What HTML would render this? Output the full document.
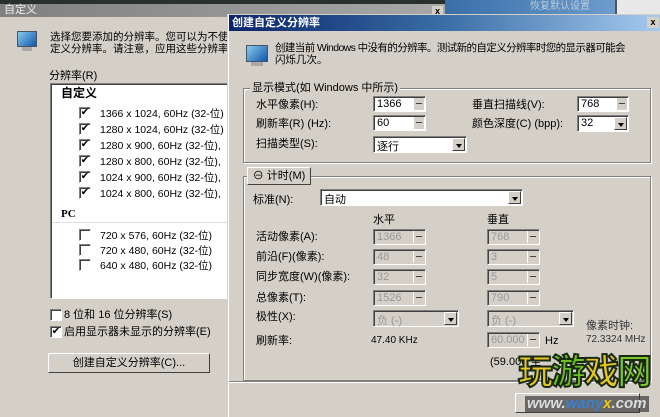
<!DOCTYPE html>
<html><head><meta charset="utf-8"><style>
*{margin:0;padding:0;box-sizing:border-box}
body{width:660px;height:417px;overflow:hidden;background:#d4d0c8;position:relative;font-family:"Liberation Sans","Noto Sans CJK SC",sans-serif;font-size:11px;color:#000}
.a{position:absolute;white-space:nowrap;line-height:12px}
.sunk{position:absolute;background:#fff;border:1px solid;border-color:#808080 #fff #fff #808080;box-shadow:inset 1px 1px 0 #404040}
.dis{background:#d4d0c8;color:#999}
.spin{position:absolute;right:1px;top:1px;bottom:1px;width:11px;background:#d4d0c8;border-left:1px solid #fff}
.spin:before{content:"";position:absolute;left:2px;right:2px;top:45%;border-top:1px solid #444}
.dd{position:absolute;right:1px;top:1px;bottom:1px;width:13px;background:#d4d0c8;border:1px solid;border-color:#fff #404040 #404040 #fff}
.dd:after{content:"";position:absolute;left:3px;top:5px;border:3px solid transparent;border-top:4px solid #000}
.grp{position:absolute;border:1px solid #808080;box-shadow:1px 1px 0 #fff inset,1px 1px 0 #fff}
.cb{position:absolute;width:12px;height:12px;background:#fff;border:1px solid;border-color:#808080 #fff #fff #808080;box-shadow:inset 1px 1px 0 #404040;font-size:10px;line-height:10px;text-align:center}
.btn{position:absolute;background:#d4d0c8;border:1px solid;border-color:#fff #404040 #404040 #fff;text-align:center}
.lst{font-size:10.5px}
</style></head><body>
<div class="a" style="left:0;top:0;width:660px;height:4px;background:#2a3030"></div>
<div class="a" style="left:0;top:4px;width:445px;height:13px;background:linear-gradient(90deg,#808080,#a8a8a8);color:#eee;padding-left:4px;line-height:13px">自定义</div>
<div class="a" style="left:432px;top:6px;width:11px;height:10px;background:#d4d0c8;font-size:9px;line-height:10px;text-align:center;font-weight:bold">x</div>
<div class="a" style="left:445px;top:0;width:170px;height:16px;background:linear-gradient(90deg,#3a6ea8,#6c9ccc);color:#bcd;text-align:center;padding-left:60px;font-size:10px;line-height:14px">恢复默认设置</div>
<div class="a" style="left:615px;top:0;width:45px;height:16px;background:#e8e8e8;border-left:2px solid #555"></div>

<div class="a" style="left:17px;top:31px;width:20px;height:16px;background:linear-gradient(135deg,#8ce,#15a);border:1px solid #456"></div>
<div class="a" style="left:22px;top:47px;width:10px;height:4px;background:#aaa"></div>
<div class="a" style="left:50px;top:31px;font-size:10.5px">选择您要添加的分辨率。您可以为不使用</div>
<div class="a" style="left:50px;top:43px;font-size:10.5px">定义分辨率。请注意，应用这些分辨率可</div>
<div class="a" style="left:49px;top:70px">分辨率(R)</div>
<div class="sunk" style="left:50px;top:83px;width:190px;height:216px"></div>
<div class="a" style="left:61px;top:86px;font-size:12px;font-weight:bold;line-height:14px">自定义</div>
<div class="cb" style="left:79px;top:107px">✔</div><div class="a lst" style="left:100px;top:108px">1366 x 1024, 60Hz (32-位)</div>
<div class="cb" style="left:79px;top:123px">✔</div><div class="a lst" style="left:100px;top:124px">1280 x 1024, 60Hz (32-位)</div>
<div class="cb" style="left:79px;top:139px">✔</div><div class="a lst" style="left:100px;top:140px">1280 x 900, 60Hz (32-位),</div>
<div class="cb" style="left:79px;top:155px">✔</div><div class="a lst" style="left:100px;top:156px">1280 x 800, 60Hz (32-位),</div>
<div class="cb" style="left:79px;top:171px">✔</div><div class="a lst" style="left:100px;top:172px">1024 x 900, 60Hz (32-位),</div>
<div class="cb" style="left:79px;top:187px">✔</div><div class="a lst" style="left:100px;top:188px">1024 x 800, 60Hz (32-位),</div>
<div class="a" style="left:61px;top:208px;font-weight:bold;font-family:'Liberation Serif',serif">PC</div>
<div class="a" style="left:52px;top:222px;width:178px;height:1px;background:#ddd"></div>
<div class="cb" style="left:79px;top:229px"></div><div class="a lst" style="left:100px;top:230px">720 x 576, 60Hz (32-位)</div>
<div class="cb" style="left:79px;top:244px"></div><div class="a lst" style="left:100px;top:245px">720 x 480, 60Hz (32-位)</div>
<div class="cb" style="left:79px;top:259px"></div><div class="a lst" style="left:100px;top:260px">640 x 480, 60Hz (32-位)</div>
<div class="cb" style="left:50px;top:309px"></div><div class="a" style="left:64px;top:309px">8 位和 16 位分辨率(S)</div>
<div class="cb" style="left:50px;top:326px">✔</div><div class="a" style="left:64px;top:326px">启用显示器未显示的分辨率(E)</div>
<div class="btn" style="left:48px;top:353px;width:162px;height:20px;line-height:18px">创建自定义分辨率(C)...</div>

<div class="a" style="left:228px;top:14px;width:432px;height:403px;background:#d4d0c8;border-left:1px solid #fff;box-shadow:-1px 0 0 #d4d0c8"></div>
<div class="a" style="left:229px;top:15px;width:431px;height:16px;background:linear-gradient(90deg,#0a246a,#3a6ea5 50%,#a6caf0);color:#fff;font-weight:bold;padding-left:3px;line-height:16px">创建自定义分辨率</div>
<div class="a" style="left:647px;top:17px;width:12px;height:11px;background:#d4d0c8;font-size:9px;line-height:11px;text-align:center;font-weight:bold">x</div>
<div class="a" style="left:246px;top:45px;width:22px;height:17px;background:linear-gradient(135deg,#8ce,#15a);border:1px solid #456"></div>
<div class="a" style="left:251px;top:62px;width:12px;height:4px;background:#aaa"></div>
<div class="a" style="left:275px;top:42px;font-size:10.5px;letter-spacing:-0.6px">创建当前 Windows 中没有的分辨率。测试新的自定义分辨率时您的显示器可能会</div>
<div class="a" style="left:275px;top:54px;font-size:10.5px">闪烁几次。</div>

<div class="grp" style="left:243px;top:88px;width:408px;height:75px"></div>
<div class="a" style="left:250px;top:82px;background:#d4d0c8;padding:0 2px">显示模式(如 Windows 中所示)</div>
<div class="a" style="left:256px;top:99px">水平像素(H):</div>
<div class="sunk" style="left:373px;top:96px;width:53px;height:16px;padding:1px 3px">1366<div class="spin"></div></div>
<div class="a" style="left:472px;top:99px">垂直扫描线(V):</div>
<div class="sunk" style="left:577px;top:96px;width:52px;height:16px;padding:1px 3px">768<div class="spin"></div></div>
<div class="a" style="left:256px;top:118px">刷新率(R) (Hz):</div>
<div class="sunk" style="left:373px;top:115px;width:53px;height:16px;padding:1px 3px">60<div class="spin"></div></div>
<div class="a" style="left:472px;top:118px">颜色深度(C) (bpp):</div>
<div class="sunk" style="left:577px;top:115px;width:52px;height:17px;padding:1px 3px">32<div class="dd"></div></div>
<div class="a" style="left:256px;top:138px">扫描类型(S):</div>
<div class="sunk" style="left:373px;top:136px;width:94px;height:17px;padding:1px 3px">逐行<div class="dd"></div></div>

<div class="grp" style="left:243px;top:176px;width:408px;height:205px"></div>
<div class="btn" style="left:247px;top:167px;width:64px;height:18px;line-height:16px">⊖ 计时(M)</div>
<div class="a" style="left:253px;top:194px">标准(N):</div>
<div class="sunk" style="left:320px;top:189px;width:203px;height:17px;padding:1px 3px">自动<div class="dd"></div></div>
<div class="a" style="left:373px;top:214px">水平</div>
<div class="a" style="left:487px;top:214px">垂直</div>
<div class="a" style="left:256px;top:231px">活动像素(A):</div>
<div class="a" style="left:256px;top:251px">前沿(F)(像素):</div>
<div class="a" style="left:256px;top:271px">同步宽度(W)(像素):</div>
<div class="a" style="left:256px;top:292px">总像素(T):</div>
<div class="a" style="left:256px;top:311px">极性(X):</div>
<div class="a" style="left:256px;top:335px">刷新率:</div>
<div class="sunk dis" style="left:373px;top:229px;width:53px;height:16px;padding:1px 3px">1366<div class="spin"></div></div>
<div class="sunk dis" style="left:487px;top:229px;width:53px;height:16px;padding:1px 3px">768<div class="spin"></div></div>
<div class="sunk dis" style="left:373px;top:249px;width:53px;height:16px;padding:1px 3px">48<div class="spin"></div></div>
<div class="sunk dis" style="left:487px;top:249px;width:53px;height:16px;padding:1px 3px">3<div class="spin"></div></div>
<div class="sunk dis" style="left:373px;top:269px;width:53px;height:16px;padding:1px 3px">32<div class="spin"></div></div>
<div class="sunk dis" style="left:487px;top:269px;width:53px;height:16px;padding:1px 3px">5<div class="spin"></div></div>
<div class="sunk dis" style="left:373px;top:290px;width:53px;height:16px;padding:1px 3px">1526<div class="spin"></div></div>
<div class="sunk dis" style="left:487px;top:290px;width:53px;height:16px;padding:1px 3px">790<div class="spin"></div></div>
<div class="sunk dis" style="left:373px;top:310px;width:86px;height:17px;padding:1px 3px">负 (-)<div class="dd"></div></div>
<div class="sunk dis" style="left:487px;top:310px;width:87px;height:17px;padding:1px 3px">负 (-)<div class="dd"></div></div>
<div class="a" style="left:586px;top:320px;color:#333">像素时钟:</div>
<div class="a" style="left:586px;top:334px;color:#333;font-size:10px">72.3324 MHz</div>
<div class="a" style="left:371px;top:335px;font-size:10px">47.40 KHz</div>
<div class="sunk dis" style="left:487px;top:332px;width:53px;height:16px;padding:1px 3px">60.000<div class="spin"></div></div>
<div class="a" style="left:545px;top:335px">Hz</div>
<div class="a" style="left:490px;top:356px">(59.000 至</div>
<div class="a" style="left:229px;top:381px;width:420px;height:2px;border-top:1px solid #808080;border-bottom:1px solid #fff"></div>
<div class="btn" style="left:515px;top:393px;width:125px;height:20px"></div>
<div class="a" style="left:518px;top:352px;font-size:35px;line-height:42px;font-weight:bold;color:#e8c820;-webkit-text-stroke:2px #1a2a10;letter-spacing:-2px"><span>玩</span><span style="color:#6cc020">游</span><span>戏</span><span style="color:#7cc830">网</span></div>
<div class="a" style="left:525px;top:396px;font-size:15px;font-weight:bold;font-style:italic;color:#123;line-height:16px;background:#333a;padding:0 2px"><span style="color:#ddd">www.</span><span style="color:#3a80d0">wany</span><span style="color:#e8c820">x</span><span style="color:#ddd">.com</span></div>
</body></html>
